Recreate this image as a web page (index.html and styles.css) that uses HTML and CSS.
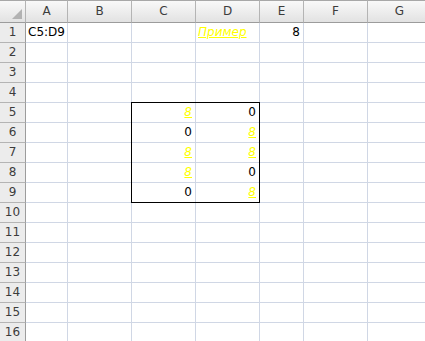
FILE: index.html
```html
<!DOCTYPE html>
<html lang="ru">
<head>
    <meta charset="UTF-8">
    <title>Лист1</title>
    <link rel="stylesheet" href="styles.css">
</head>
<body>
<div class="sheet">
    <div class="corner"><span class="tri"></span></div>
    <div class="ch">A</div><div class="ch">B</div><div class="ch">C</div><div class="ch">D</div><div class="ch">E</div><div class="ch">F</div><div class="ch">G</div>

    <div class="rh">1</div><div class="c">C5:D9</div><div class="c"></div><div class="c"></div><div class="c link">Пример</div><div class="c num">8</div><div class="c"></div><div class="c"></div>
    <div class="rh">2</div><div class="c"></div><div class="c"></div><div class="c"></div><div class="c"></div><div class="c"></div><div class="c"></div><div class="c"></div>
    <div class="rh">3</div><div class="c"></div><div class="c"></div><div class="c"></div><div class="c"></div><div class="c"></div><div class="c"></div><div class="c"></div>
    <div class="rh">4</div><div class="c"></div><div class="c"></div><div class="c"></div><div class="c"></div><div class="c"></div><div class="c"></div><div class="c"></div>
    <div class="rh">5</div><div class="c"></div><div class="c"></div><div class="c num link">8</div><div class="c num">0</div><div class="c"></div><div class="c"></div><div class="c"></div>
    <div class="rh">6</div><div class="c"></div><div class="c"></div><div class="c num">0</div><div class="c num link">8</div><div class="c"></div><div class="c"></div><div class="c"></div>
    <div class="rh">7</div><div class="c"></div><div class="c"></div><div class="c num link">8</div><div class="c num link">8</div><div class="c"></div><div class="c"></div><div class="c"></div>
    <div class="rh">8</div><div class="c"></div><div class="c"></div><div class="c num link">8</div><div class="c num">0</div><div class="c"></div><div class="c"></div><div class="c"></div>
    <div class="rh">9</div><div class="c"></div><div class="c"></div><div class="c num">0</div><div class="c num link">8</div><div class="c"></div><div class="c"></div><div class="c"></div>
    <div class="rh">10</div><div class="c"></div><div class="c"></div><div class="c"></div><div class="c"></div><div class="c"></div><div class="c"></div><div class="c"></div>
    <div class="rh">11</div><div class="c"></div><div class="c"></div><div class="c"></div><div class="c"></div><div class="c"></div><div class="c"></div><div class="c"></div>
    <div class="rh">12</div><div class="c"></div><div class="c"></div><div class="c"></div><div class="c"></div><div class="c"></div><div class="c"></div><div class="c"></div>
    <div class="rh">13</div><div class="c"></div><div class="c"></div><div class="c"></div><div class="c"></div><div class="c"></div><div class="c"></div><div class="c"></div>
    <div class="rh">14</div><div class="c"></div><div class="c"></div><div class="c"></div><div class="c"></div><div class="c"></div><div class="c"></div><div class="c"></div>
    <div class="rh">15</div><div class="c"></div><div class="c"></div><div class="c"></div><div class="c"></div><div class="c"></div><div class="c"></div><div class="c"></div>
    <div class="rh">16</div><div class="c"></div><div class="c"></div><div class="c"></div><div class="c"></div><div class="c"></div><div class="c"></div><div class="c"></div>

    <!-- рамка вокруг C5:D9 -->
    <div class="range"></div>
</div>
</body>
</html>
```

FILE: styles.css
```css
* {
    margin: 0;
    padding: 0;
    box-sizing: border-box;
}

body {
    background: #fff;
    overflow: hidden;
    font-family: "DejaVu Sans", Verdana, sans-serif;
    font-size: 12px;
}

.sheet {
    position: relative;
    display: grid;
    grid-template-columns: 26px 42px 64px 64px 64px 44px 64px 64px;
    grid-template-rows: 23px;
    grid-auto-rows: 20px;
    width: 432px;
}

.corner,
.ch {
    background: linear-gradient(#f9f9f9, #e2e2e2);
    border-top: 1px solid #a8a8a8;
    border-right: 1px solid #b4b4b4;
    border-bottom: 1px solid #9c9c9c;
}

.corner {
    position: relative;
}

.corner .tri {
    position: absolute;
    right: 3px;
    bottom: 3px;
    width: 0;
    height: 0;
    border-left: 10px solid transparent;
    border-bottom: 10px solid #b2b2b2;
}

.ch {
    color: #3c3c3c;
    text-align: center;
    line-height: 21px;
}

.rh {
    background: #ececec;
    color: #3c3c3c;
    text-align: center;
    line-height: 19px;
    border-right: 1px solid #9c9c9c;
    border-bottom: 1px solid #b4b4b4;
}

.c {
    border-right: 1px solid #d0d7e5;
    border-bottom: 1px solid #d0d7e5;
    padding: 0 2px;
    line-height: 19px;
    white-space: nowrap;
    color: #000;
}

.c.num {
    text-align: right;
    padding-right: 3px;
}

.c.link {
    color: #ffff00;
    font-style: italic;
    text-decoration: underline;
}

.range {
    position: absolute;
    left: 131px;
    top: 102px;
    width: 129px;
    height: 101px;
    border: 1px solid #000;
    pointer-events: none;
}
```
